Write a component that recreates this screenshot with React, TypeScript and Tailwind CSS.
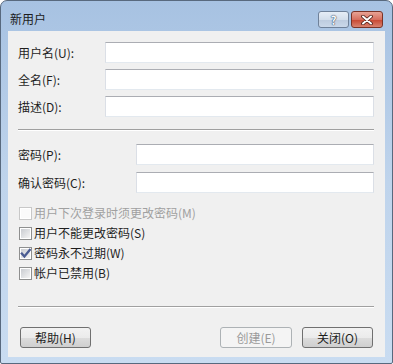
import React from "react";

const FONT = "font-['Noto_Sans_CJK_SC','Noto_Sans_CJK_JP',sans-serif]";

function TextBox({ className = "" }: { className?: string }) {
  return (
    <div
      className={`h-[21px] flex-1 border border-t-[#abadb3] border-x-[#dbdfe6] border-b-[#e3e9ef] bg-white ${className}`}
    />
  );
}

function CheckBox({ checked, disabled }: { checked?: boolean; disabled?: boolean }) {
  return (
    <div
      className={`flex h-[13px] w-[13px] shrink-0 items-center justify-center border ${
        disabled ? "border-[#c8c8c8] bg-white" : "border-[#8e8f8f] bg-white"
      }`}
    >
      <div
        className={`relative h-[9px] w-[9px] ${
          disabled ? "bg-[#fafafa]" : "bg-gradient-to-br from-[#c9ccd1] to-[#f4f4f4]"
        }`}
      >
        {checked ? (
          <svg viewBox="0 0 9 9" className="absolute -left-[1px] -top-[1px] h-[11px] w-[11px]">
            <path
              d="M1.5 4.6 L3.6 6.9 L8 1.6"
              fill="none"
              stroke="#4a5c92"
              strokeWidth="1.9"
              strokeLinecap="square"
            />
          </svg>
        ) : null}
      </div>
    </div>
  );
}

function Option({
  label,
  checked,
  disabled,
}: {
  label: string;
  checked?: boolean;
  disabled?: boolean;
}) {
  return (
    <div className="flex h-[20px] items-center gap-[2px] pl-[1px]">
      <CheckBox checked={checked} disabled={disabled} />
      <span className={disabled ? "text-[#a0a0a0]" : "text-[#1e1e1e]"}>{label}</span>
    </div>
  );
}

function Button({ label, disabled }: { label: string; disabled?: boolean }) {
  return (
    <div
      className={`flex h-[21px] items-center justify-center rounded-[3px] border ${
        disabled
          ? "w-[72px] border-[#adb2b5] bg-[#f4f4f4] text-[#9a9a9a]"
          : "w-[71px] border-[#707070] bg-[linear-gradient(#f2f2f2_0%,#ebebeb_50%,#dddddd_51%,#cfcfcf_100%)] text-[#1e1e1e]"
      }`}
    >
      {label}
    </div>
  );
}

function Separator({ className = "" }: { className?: string }) {
  return <div className={`h-[2px] border-t border-t-[#a0a0a0] border-b border-b-white ${className}`} />;
}

export default function App() {
  return (
    <div
      className={`flex h-[364px] w-[393px] flex-col rounded-t-[7px] rounded-b-[2px] border border-[#58697e] bg-gradient-to-b from-[#a7c2e2] via-[#bfd4ec] to-[#c9dcf1] px-[7px] pb-[6px] text-[12px] leading-[16px] ${FONT}`}
    >
      {/* title bar */}
      <div className="flex h-[30px] shrink-0 items-end justify-between pb-[3px] pl-[2px] pr-[2px]">
        <span className="pb-[1px] text-[12px] text-[#1b1b1b]">新用户</span>
        <div className="flex gap-[2px]">
          <div className="flex h-[17px] w-[31px] items-center justify-center rounded-[3px] border border-[#6f8199] bg-[linear-gradient(#e6edf6_0%,#d3deeb_50%,#bccbde_51%,#cad8e9_100%)] text-[12px] font-bold leading-none text-[#f6f8fb] [text-shadow:0_0_1px_#1f3350,0_0_1px_#1f3350]">
            ?
          </div>
          <div className="flex h-[17px] w-[32px] items-center justify-center rounded-[3px] border border-[#7b3326] bg-[linear-gradient(#e8a395_0%,#d7705f_50%,#c7452f_51%,#d8826f_100%)]">
            <svg viewBox="0 0 14 10" className="h-[10px] w-[14px]">
              <path d="M3 1.5 L11 8.5 M11 1.5 L3 8.5" stroke="#4a1c14" strokeWidth="3.6" strokeLinecap="round" />
              <path d="M3 1.5 L11 8.5 M11 1.5 L3 8.5" stroke="#ffffff" strokeWidth="2" strokeLinecap="round" />
            </svg>
          </div>
        </div>
      </div>

      {/* client area */}
      <div className="flex flex-1 flex-col bg-[#f0f0f0] text-[#1e1e1e]">
        <div className="flex flex-col gap-[6px] pl-[10px] pr-[11px] pt-[11px]">
          <div className="flex items-center">
            <span className="w-[87px]">用户名(U):</span>
            <TextBox />
          </div>
          <div className="flex items-center">
            <span className="w-[87px]">全名(F):</span>
            <TextBox />
          </div>
          <div className="flex items-center">
            <span className="w-[87px]">描述(D):</span>
            <TextBox />
          </div>
        </div>

        <Separator className="ml-[10px] mr-[11px] mt-[12px]" />

        <div className="mt-[13px] flex flex-col gap-[7px] pl-[10px] pr-[11px]">
          <div className="flex items-center">
            <span className="w-[118px]">密码(P):</span>
            <TextBox />
          </div>
          <div className="flex items-center">
            <span className="w-[118px]">确认密码(C):</span>
            <TextBox />
          </div>
        </div>

        <div className="mt-[10px] flex flex-col pl-[10px]">
          <Option label="用户下次登录时须更改密码(M)" disabled />
          <Option label="用户不能更改密码(S)" />
          <Option label="密码永不过期(W)" checked />
          <Option label="帐户已禁用(B)" />
        </div>

        <Separator className="ml-[10px] mr-[11px] mt-[23px]" />

        <div className="mt-[19px] flex items-center justify-between px-[12px]">
          <Button label="帮助(H)" />
          <div className="flex gap-[10px]">
            <Button label="创建(E)" disabled />
            <Button label="关闭(O)" />
          </div>
        </div>
      </div>
    </div>
  );
}
